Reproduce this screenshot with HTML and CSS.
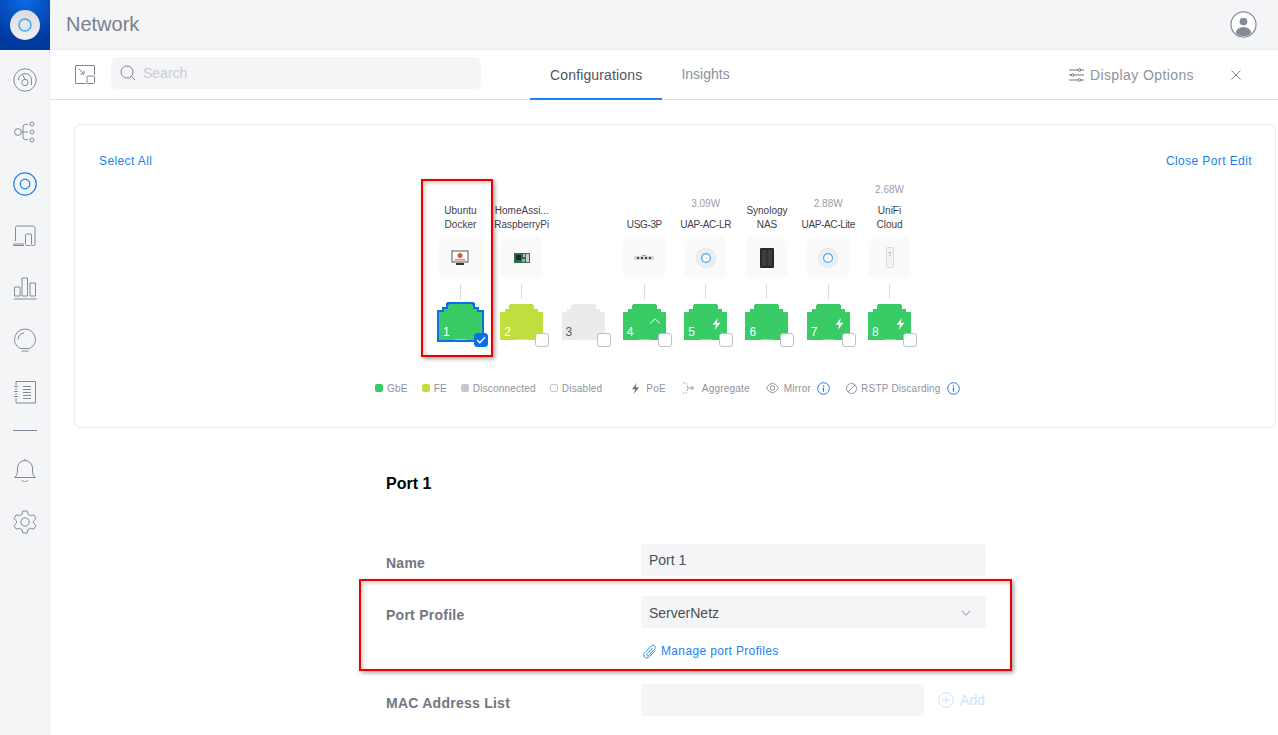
FILE: index.html
```html
<!DOCTYPE html>
<html lang="en">
<head>
  <meta charset="UTF-8">
  <title>Network</title>
  <link rel="stylesheet" href="styles.css">
</head>
<body>

<svg class="defs" width="0" height="0">
  <symbol id="rj45" viewBox="0 0 43 36" overflow="visible">
    <path d="M0 8H5V5H9V1H10V0H33V1H34V5H38V8H43V36H0Z"/>
  </symbol>
  <symbol id="bolt" viewBox="1 0 10 14">
    <path d="M7.500 0 1.500 8H5.500L4 14 10.500 5.500H6.500Z"/>
  </symbol>
  <symbol id="info" viewBox="0 0 13 13">
    <circle cx="6.500" cy="6.500" r="5.800" fill="none" stroke="currentColor"/>
    <path d="M6.500 5.600V9.800M6.500 3.200V4.400" fill="none" stroke="currentColor" stroke-width="1.200"/>
  </symbol>
  <symbol id="uap" viewBox="0 0 22 22">
    <circle cx="11" cy="11" r="10" fill="#eceef1" stroke="#e0e2e6" stroke-width=".6"/>
    <circle cx="11" cy="11" r="4.400" fill="#fff" stroke="#43a7ee" stroke-width="1.200"/>
    <circle cx="11" cy="11" r="1" fill="#bfe0f7"/>
  </symbol>
</svg>

<div class="sidebar">
  <div class="logo">
    <svg width="30" height="30" viewBox="0 0 30 30">
      <defs>
        <linearGradient id="logoFace" x1="0" y1="0" x2="0" y2="1">
          <stop offset="0" stop-color="#d8dade"/>
          <stop offset="1" stop-color="#f1f2f3"/>
        </linearGradient>
      </defs>
      <circle cx="15" cy="15" r="15" fill="url(#logoFace)"/>
      <circle cx="15" cy="15" r="6" fill="#dfe7ee" stroke="#3ea6f3" stroke-width="1.400"/>
    </svg>
  </div>
  <nav class="nav">
    <svg class="nav-icon" viewBox="0 0 24 24">
      <circle cx="12" cy="12" r="11.200"/>
      <path d="M5.500 12a6.500 6.500 0 0 1 13 0v5"/>
      <circle cx="12" cy="14.500" r="3.200"/>
      <path d="M9.500 6.500 12 11.300"/>
    </svg>
    <svg class="nav-icon" viewBox="0 0 24 24">
      <circle cx="5" cy="12" r="3.400"/>
      <path d="M8.400 12H15M15 4.500h-2.500a2.500 2.500 0 0 0-2.500 2.500v10a2.500 2.500 0 0 0 2.500 2.500H15"/>
      <circle cx="19" cy="4" r="2"/>
      <circle cx="19" cy="12" r="2"/>
      <circle cx="19" cy="20" r="2"/>
    </svg>
    <svg class="nav-icon nav-active" viewBox="0 0 24 24">
      <circle cx="12" cy="12" r="11.200"/>
      <circle cx="12" cy="12" r="4.800"/>
    </svg>
    <svg class="nav-icon" viewBox="0 0 24 24">
      <path d="M2.500 17V3.500a1.500 1.500 0 0 1 1.500-1.500h16.500a1.500 1.500 0 0 1 1.500 1.500V20a1.500 1.500 0 0 1-1.500 1.500H19"/>
      <path d="M.8 21.500H11M.8 21.500V20H11"/>
      <rect x="12.500" y="10" width="6" height="11.500" rx="1"/>
    </svg>
    <svg class="nav-icon" viewBox="0 0 24 24">
      <rect x="1.500" y="11" width="5.500" height="9"/>
      <rect x="9" y="2" width="5.500" height="18"/>
      <rect x="17" y="7" width="5.500" height="13"/>
      <path d="M.5 23H23.500"/>
    </svg>
    <svg class="nav-icon" viewBox="0 0 24 24">
      <path d="M8 20.500C4 19 1.500 15.500 1.500 11.500a10.500 10.500 0 0 1 21 0c0 4-2.500 7.500-6.500 9Z"/>
      <path d="M5 11.500A7 7 0 0 1 11 5M8.500 23H15.500"/>
    </svg>
    <svg class="nav-icon" viewBox="0 0 24 24">
      <path d="M3 1.500H22.500V23H3V18M3 15V13M3 10V8M3 5V1.500"/>
      <path d="M1 6.500H5M1 11.500H5M1 16.500H5M10 6.500H18M10 9.500H18M10 12.500H18M10 15.500H18M10 18.500H18"/>
    </svg>
    <div class="nav-divider"></div>
    <svg class="nav-icon" viewBox="0 0 24 24">
      <path d="M1.500 19.500C3.500 18 4.500 16 4.500 13V10a7.500 7.500 0 0 1 15 0v3c0 3 1 5 3 6.500Z"/>
      <path d="M12 .8V2.500M9 22a3.200 3.200 0 0 0 6 0"/>
    </svg>
    <svg class="nav-icon" viewBox="0 0 24 24">
      <circle cx="12" cy="12" r="4.200"/>
      <path d="M9.800 1H14.200L15 4.300 17.500 5.700 20.800 4.800 23 8.600 20.500 11V13L23 15.400 20.800 19.200 17.500 18.300 15 19.700 14.200 23H9.800L9 19.700 6.500 18.300 3.200 19.200 1 15.400 3.500 13V11L1 8.600 3.200 4.800 6.500 5.700 9 4.300Z"/>
    </svg>
  </nav>
</div>

<div class="main">
  <header class="topbar">
    <span class="topbar-title">Network</span>
    <svg class="avatar" width="27" height="27" viewBox="0 0 28 28">
      <defs><clipPath id="avatarClip"><circle cx="14" cy="14" r="12"/></clipPath></defs>
      <circle cx="14" cy="14" r="13" fill="#fff" stroke="#868a98" stroke-width="1.300"/>
      <circle cx="14" cy="11" r="4" fill="#868a98"/>
      <ellipse cx="14" cy="23" rx="8" ry="6.500" fill="#868a98" clip-path="url(#avatarClip)"/>
    </svg>
  </header>

  <div class="toolbar">
    <svg class="collapse-icon" width="20" height="20" viewBox="0 0 20 20">
      <path d="M12 .5H1A.5.5 0 0 0 .500 1V18a.5.5 0 0 0 .5.500H11M19.500 10V1a.5.5 0 0 0-.5-.5H12"/>
      <rect x="12" y="11" width="7.500" height="7.500" rx="1"/>
      <path d="M3.500 3.500 9 9M9 5.500V9H5.500"/>
    </svg>
    <div class="search">
      <svg width="16" height="16" viewBox="0 0 16 16">
        <circle cx="7" cy="7" r="6"/>
        <path d="M11.500 11.500 15 15"/>
      </svg>
      <span>Search</span>
    </div>
    <div class="tabs">
      <a class="tab tab-active">Configurations</a>
      <a class="tab">Insights</a>
    </div>
    <div class="display-options">
      <svg width="15" height="14" viewBox="0 0 15 14">
        <path d="M0 2H15M0 7H15M0 12H15"/>
        <circle cx="10.500" cy="2" r="1.300" fill="#fff"/>
        <circle cx="3.500" cy="7" r="1.300" fill="#fff"/>
        <circle cx="10.500" cy="12" r="1.300" fill="#fff"/>
      </svg>
      <span>Display Options</span>
    </div>
    <svg class="close-icon" width="10" height="10" viewBox="0 0 10 10">
      <path d="M.5.500 9.500 9.500M9.500.500 .5 9.500"/>
    </svg>
  </div>

  <section class="panel">
    <div class="panel-head">
      <a class="link">Select All</a>
      <a class="link">Close Port Edit</a>
    </div>

    <div class="ports">
      <div class="port-col">
        <div class="labels"><span>Ubuntu</span><span>Docker</span></div>
        <div class="tile">
          <svg width="18" height="16" viewBox="0 0 18 16">
            <rect x="1" y="1" width="16" height="11" fill="#fff" stroke="#555"/>
            <circle cx="9" cy="5.500" r="2.500" fill="#d9553a"/>
            <rect x="3.500" y="9" width="11" height="1.500" fill="#e08a75"/>
            <rect x="5" y="13" width="8" height="2" fill="#333"/>
          </svg>
        </div>
        <div class="wire"></div>
        <div class="port port-selected">
          <svg class="port-shape" viewBox="0 0 43 36"><use href="#rj45"/></svg>
          <span class="port-num">1</span>
          <span class="port-foot"></span>
          <span class="check check-on">
            <svg width="10" height="8" viewBox="0 0 10 8"><path d="M1 4 3.800 6.800 9 1.200"/></svg>
          </span>
        </div>
      </div>

      <div class="port-col">
        <div class="labels"><span>HomeAssi...</span><span>RaspberryPi</span></div>
        <div class="tile">
          <svg width="16" height="12" viewBox="0 0 16 12">
            <rect x="0" y="1" width="16" height="10" fill="#2f6d50"/>
            <rect x="2" y="3" width="5" height="5" fill="#1d2c26"/>
            <rect x="9" y="2" width="2" height="3" fill="#b8c4bd"/>
            <rect x="12" y="2" width="3" height="8" fill="#c8d0cb"/>
            <rect x="8" y="7" width="3" height="3" fill="#8fb3a0"/>
          </svg>
        </div>
        <div class="wire"></div>
        <div class="port port-fe">
          <svg class="port-shape" viewBox="0 0 43 36"><use href="#rj45"/></svg>
          <span class="port-num">2</span>
          <span class="port-foot"></span>
          <span class="check"></span>
        </div>
      </div>

      <div class="port-col">
        <div class="labels"></div>
        <div class="tile tile-empty"></div>
        <div class="wire wire-empty"></div>
        <div class="port port-off">
          <svg class="port-shape" viewBox="0 0 43 36"><use href="#rj45"/></svg>
          <span class="port-num">3</span>
          <span class="port-foot"></span>
          <span class="check"></span>
        </div>
      </div>

      <div class="port-col">
        <div class="labels"><span class="label-caps">USG-3P</span></div>
        <div class="tile">
          <svg width="20" height="6" viewBox="0 0 20 6">
            <rect x="0" y="1" width="20" height="4" rx="1" fill="#d4d6da"/>
            <rect x="3" y="2" width="2" height="2" fill="#444"/>
            <rect x="7" y="2" width="2" height="2" fill="#444"/>
            <rect x="11" y="2" width="2" height="2" fill="#444"/>
            <rect x="15" y="2" width="2" height="2" fill="#444"/>
            <rect x="8" y="0" width="4" height="1" fill="#6bb5e8"/>
          </svg>
        </div>
        <div class="wire"></div>
        <div class="port">
          <svg class="port-shape" viewBox="0 0 43 36"><use href="#rj45"/></svg>
          <span class="port-num">4</span>
          <svg class="port-up" width="12" height="6" viewBox="0 0 12 6"><path d="M1 5.500 6 .8 11 5.500"/></svg>
          <span class="port-foot"></span>
          <span class="check"></span>
        </div>
      </div>

      <div class="port-col">
        <div class="labels"><span class="watt">3.09W</span><span class="label-caps">UAP-AC-LR</span></div>
        <div class="tile"><svg width="22" height="22"><use href="#uap"/></svg></div>
        <div class="wire"></div>
        <div class="port">
          <svg class="port-shape" viewBox="0 0 43 36"><use href="#rj45"/></svg>
          <span class="port-num">5</span>
          <svg class="port-bolt" width="9" height="12"><use href="#bolt"/></svg>
          <span class="port-foot"></span>
          <span class="check"></span>
        </div>
      </div>

      <div class="port-col">
        <div class="labels"><span>Synology</span><span>NAS</span></div>
        <div class="tile">
          <svg width="14" height="20" viewBox="0 0 14 20">
            <rect x="0" y="0" width="14" height="20" rx="1" fill="#26282b"/>
            <rect x="2" y="2" width="4.500" height="16" fill="#3b3e42"/>
            <rect x="7.500" y="2" width="4.500" height="16" fill="#3b3e42"/>
          </svg>
        </div>
        <div class="wire"></div>
        <div class="port">
          <svg class="port-shape" viewBox="0 0 43 36"><use href="#rj45"/></svg>
          <span class="port-num">6</span>
          <span class="port-foot"></span>
          <span class="check"></span>
        </div>
      </div>

      <div class="port-col">
        <div class="labels"><span class="watt">2.88W</span><span class="label-caps">UAP-AC-Lite</span></div>
        <div class="tile"><svg width="22" height="22"><use href="#uap"/></svg></div>
        <div class="wire"></div>
        <div class="port">
          <svg class="port-shape" viewBox="0 0 43 36"><use href="#rj45"/></svg>
          <span class="port-num">7</span>
          <svg class="port-bolt" width="9" height="12"><use href="#bolt"/></svg>
          <span class="port-foot"></span>
          <span class="check"></span>
        </div>
      </div>

      <div class="port-col">
        <div class="labels"><span class="watt">2.68W</span><span>UniFi</span><span>Cloud</span></div>
        <div class="tile">
          <svg width="8" height="21" viewBox="0 0 8 21">
            <rect x=".5" y=".5" width="7" height="20" rx="1" fill="#f3f3f4" stroke="#d8d9dc"/>
            <rect x="3.300" y="5" width="1.400" height="1.400" fill="#8a8d92"/>
            <rect x="3.300" y="8" width="1.400" height="1.400" fill="#b5b7bb"/>
          </svg>
        </div>
        <div class="wire"></div>
        <div class="port">
          <svg class="port-shape" viewBox="0 0 43 36"><use href="#rj45"/></svg>
          <span class="port-num">8</span>
          <svg class="port-bolt" width="9" height="12"><use href="#bolt"/></svg>
          <span class="port-foot"></span>
          <span class="check"></span>
        </div>
      </div>
    </div>

    <div class="legend">
      <span class="legend-item"><i class="dot dot-gbe"></i>GbE</span>
      <span class="legend-item"><i class="dot dot-fe"></i>FE</span>
      <span class="legend-item"><i class="dot dot-off"></i>Disconnected</span>
      <span class="legend-item"><i class="dot dot-disabled"></i>Disabled</span>
      <span class="legend-item legend-poe">
        <svg class="legend-bolt" width="9" height="11"><use href="#bolt"/></svg>PoE
      </span>
      <span class="legend-item legend-wide">
        <svg class="legend-line legend-aggregate" width="13" height="12" viewBox="0 0 13 12">
          <path class="dashed" d="M1 1H2.500C5 1 5.500 3 5.500 6S5 11 2.500 11H1"/>
          <path d="M5.500 6H11.500M9.500 4 11.500 6 9.500 8"/>
        </svg>Aggregate
      </span>
      <span class="legend-item legend-wide">
        <svg class="legend-line" width="13" height="10" viewBox="0 0 13 10">
          <path d="M.5 5C2.500 1.800 4.500.5 6.500.5S10.500 1.800 12.500 5C10.500 8.200 8.500 9.500 6.500 9.500S2.500 8.200.5 5Z"/>
          <circle cx="6.500" cy="5" r="2.200"/>
        </svg>Mirror
        <svg class="legend-info" width="13" height="13"><use href="#info"/></svg>
      </span>
      <span class="legend-item legend-wide">
        <svg class="legend-line legend-rstp" width="11" height="11" viewBox="0 0 11 11">
          <circle cx="5.500" cy="5.500" r="5"/>
          <path d="M2 9 9 2"/>
        </svg>RSTP Discarding
        <svg class="legend-info" width="13" height="13"><use href="#info"/></svg>
      </span>
    </div>
  </section>

  <form class="port-form">
    <h2 class="form-title">Port 1</h2>

    <div class="form-row">
      <label class="form-label">Name</label>
      <div class="form-field">
        <div class="input">Port 1</div>
      </div>
    </div>

    <div class="form-row">
      <label class="form-label">Port Profile</label>
      <div class="form-field">
        <div class="input input-select">
          ServerNetz
          <svg width="10" height="6" viewBox="0 0 10 6"><path d="M.8.8 5 5 9.200.8"/></svg>
        </div>
        <a class="manage-link">
          <svg width="14" height="15" viewBox="0 0 14 15">
            <path d="M12.300 6.500 6.500 12.600C5 14.200 2.800 14.400 1.600 13.200S.6 10 2 8.500L8 2.200C9 1.100 10.600.9 11.600 1.800S12.500 4.200 11.500 5.300L5.800 11.300C5.200 11.900 4.400 12 3.900 11.500S3.500 10.300 4.100 9.700L9.500 4"/>
          </svg>
          Manage port Profiles
        </a>
      </div>
    </div>

    <div class="form-row form-row-last">
      <label class="form-label">MAC Address List</label>
      <div class="form-field form-field-add">
        <div class="input input-mac"></div>
        <span class="add-btn">
          <svg width="16" height="16" viewBox="0 0 16 16">
            <circle cx="8" cy="8" r="7.400"/>
            <path d="M8 4V12M4 8H12"/>
          </svg>
          Add
        </span>
      </div>
    </div>
  </form>
</div>

<!-- annotations drawn on top of the screenshot -->
<div class="callout callout-port"></div>
<div class="callout callout-profile"></div>

</body>
</html>
```

FILE: styles.css
```css
* {
  box-sizing: border-box;
}

html, body {
  height: 735px;
  overflow: hidden;
}

body {
  margin: 0;
  display: flex;
  position: relative;
  background-color: #fff;
  font-family: "Liberation Sans", Arial, sans-serif;
  color: #80848f;
}

.defs {
  position: absolute;
}

/* sidebar */
.sidebar {
  width: 50px;
  flex-shrink: 0;
  background-color: #f4f5f7;
  border-right: 1px solid #e9eaee;
}

.logo {
  width: 50px;
  height: 50px;
  display: flex;
  align-items: center;
  justify-content: center;
  background: radial-gradient(circle at 50% 0, #0a6be6, #003a9e 75%);
}

.nav {
  display: flex;
  flex-direction: column;
  align-items: center;
  gap: 28px;
  padding-top: 18px;
}

.nav-icon {
  width: 24px;
  height: 24px;
  fill: none;
  stroke: #868a98;
  stroke-width: 1;
  stroke-linejoin: round;
}

.nav-active {
  stroke: #1b7fee;
  stroke-width: 1.200;
}

.nav-divider {
  width: 24px;
  height: 1px;
  margin: -2px 0 -1px;
  background-color: #868a98;
}

/* top */
.main {
  flex: 1;
  min-width: 0;
}

.topbar {
  height: 50px;
  display: flex;
  align-items: center;
  justify-content: space-between;
  padding: 0 21px 0 16px;
  background-color: #f4f5f7;
  border-bottom: 1px solid #ececf0;
}

.topbar-title {
  font-size: 20px;
  color: #7c808d;
}

.toolbar {
  height: 50px;
  display: flex;
  align-items: center;
  padding-left: 25px;
  border-bottom: 1px solid #dfe0e4;
}

.collapse-icon {
  fill: none;
  stroke: #80848f;
}

.search {
  width: 370px;
  height: 32px;
  margin: -3px 0 0 16px;
  padding-left: 9px;
  display: flex;
  align-items: center;
  gap: 7px;
  background-color: #f4f5f7;
  border-radius: 6px;
  font-size: 14px;
  color: #c9ccd6;
}

.search svg {
  fill: none;
  stroke: #80848f;
}

.tabs {
  display: flex;
  align-self: stretch;
  margin-left: 49px;
  margin-bottom: -1px;
}

.tab {
  display: flex;
  align-items: center;
  padding: 0 19px 2px;
  font-size: 14px;
  color: #8e929e;
}

.tab-active {
  padding: 1px 20px 0;
  letter-spacing: 0.15px;
  color: #50545f;
  border-bottom: 2px solid #1b7fee;
}

.display-options {
  display: flex;
  align-items: center;
  gap: 6px;
  margin-left: auto;
  font-size: 14px;
  letter-spacing: 0.4px;
  color: #8e929e;
}

.display-options svg {
  fill: none;
  stroke: #70747f;
}

.close-icon {
  margin: 0 37px 0 37px;
  fill: none;
  stroke: #868a98;
}

/* port panel */
.panel {
  margin: 24px 2px 0 24px;
  height: 304px;
  padding: 29px 23px 0 24px;
  border: 1px solid #ececf0;
  border-radius: 6px;
}

.panel-head {
  display: flex;
  justify-content: space-between;
}

.link {
  font-size: 12px;
  line-height: 14px;
  letter-spacing: 0.4px;
  color: #1b7fee;
}

.ports {
  display: flex;
  justify-content: center;
  margin-top: 15px;
  margin-left: -1px;
}

.port-col {
  width: 61.3px;
  display: flex;
  flex-direction: column;
  align-items: center;
}

.labels {
  height: 49px;
  display: flex;
  flex-direction: column;
  justify-content: flex-end;
  align-items: center;
  font-size: 10px;
  line-height: 14px;
  color: #3f4149;
  white-space: nowrap;
}

.label-caps {
  letter-spacing: -0.35px;
}

.watt {
  margin-bottom: 7px;
  color: #9a9da6;
}

.tile {
  width: 43px;
  height: 43px;
  margin-top: 4px;
  display: flex;
  align-items: center;
  justify-content: center;
  background-color: #fafafb;
  border-radius: 7px;
}

.tile-empty {
  background: none;
}

.wire {
  width: 1px;
  height: 15px;
  margin-top: 5px;
  background-color: #d9d9dd;
}

.wire-empty {
  background: none;
}

.port {
  position: relative;
  width: 43px;
  height: 36px;
  margin-top: 5px;
  fill: #39cb66;
}

.port-shape {
  display: block;
  width: 43px;
  height: 36px;
  overflow: visible;
}

.port-fe {
  fill: #bfdf3f;
}

.port-off {
  fill: #ebebed;
}

.port-selected .port-shape {
  stroke: #0a6fe8;
  stroke-width: 4;
  paint-order: stroke;
}

.port-num {
  position: absolute;
  left: 4px;
  bottom: 1px;
  font-size: 12px;
  line-height: 14px;
  color: #fff;
}

.port-off .port-num {
  color: #555862;
}

.port-foot {
  position: absolute;
  left: 16px;
  bottom: 0;
  width: 12px;
  height: 1px;
  background-color: rgba(255, 255, 255, 0.35);
}

.port-bolt {
  position: absolute;
  top: 14px;
  right: 6px;
  fill: #fff;
}

.port-up {
  position: absolute;
  top: 14px;
  right: 5px;
  fill: none;
  stroke: #fff;
}

.check {
  position: absolute;
  right: -6px;
  bottom: -7px;
  width: 14px;
  height: 14px;
  display: flex;
  align-items: center;
  justify-content: center;
  background-color: #fff;
  border: 1px solid #bcbec8;
  border-radius: 3px;
}

.check-on {
  background-color: #0a6fe8;
  border-color: #0a6fe8;
}

.check-on svg {
  fill: none;
  stroke: #fff;
  stroke-width: 1.300;
}

/* legend */
.legend {
  display: flex;
  align-items: center;
  gap: 14px;
  height: 14px;
  margin: 41px 0 0 276px;
  font-size: 10px;
  letter-spacing: 0.2px;
  white-space: nowrap;
  color: #8e929e;
}

.legend-item {
  display: flex;
  align-items: center;
}

.dot {
  width: 8px;
  height: 8px;
  margin-right: 4px;
  border-radius: 2px;
}

.dot-gbe {
  background-color: #39cb66;
}

.dot-fe {
  background-color: #bfdf3f;
}

.dot-off {
  background-color: #c6c8d0;
}

.dot-disabled {
  background-color: #fff;
  border: 1px solid #c6c8d0;
}

.legend-poe {
  margin-left: 15px;
}

.legend-wide {
  margin-left: 2px;
}

.legend-bolt {
  margin-right: 6px;
  fill: #70747f;
}

.legend-line {
  margin-right: 5px;
  fill: none;
  stroke: #8e929e;
}

.legend-aggregate {
  margin-right: 7px;
}

.legend-aggregate .dashed {
  stroke-dasharray: 1.500 1.500;
}

.legend-rstp {
  margin-right: 4px;
}

.legend-info {
  margin-left: 6px;
  color: #1b7fee;
}

/* form below the panel */
.port-form {
  margin: 46px 0 0 336px;
}

.form-title {
  margin: 0 0 50px;
  font-size: 16px;
  line-height: 20px;
  color: #000;
}

.form-row {
  display: grid;
  grid-template-columns: 255px 345px;
  margin-bottom: 20px;
}

.form-label {
  padding-top: 11px;
  font-size: 14px;
  line-height: 16px;
  font-weight: bold;
  letter-spacing: 0.25px;
  color: #737680;
}

.input {
  height: 32px;
  padding: 0 8px;
  display: flex;
  align-items: center;
  justify-content: space-between;
  background-color: #f4f5f7;
  border-radius: 4px;
  font-size: 14px;
  color: #4c4f58;
}

.input-select {
  padding-top: 1px;
}

.input-select svg {
  margin-right: 7px;
  fill: none;
  stroke: #b4b6be;
  stroke-width: 1.300;
}

.manage-link {
  display: flex;
  align-items: center;
  gap: 4px;
  height: 16px;
  margin: 15px 0 5px 2px;
  font-size: 12px;
  letter-spacing: 0.35px;
  color: #1b7fee;
}

.manage-link svg {
  fill: none;
  stroke: #1b7fee;
  stroke-width: 0.9;
}

.form-field-add {
  display: flex;
  align-items: center;
  gap: 14px;
}

.input-mac {
  width: 283px;
}

.add-btn {
  display: flex;
  align-items: center;
  gap: 6px;
  font-size: 14px;
  letter-spacing: 0.1px;
  color: #cfe3fb;
}

.add-btn svg {
  fill: none;
  stroke: #cfe3fb;
}

/* red annotation boxes */
.callout {
  position: absolute;
  border: 2px solid #ee0000;
  box-shadow: 2px 2px 4px rgba(0, 0, 0, 0.35), inset 2px 2px 4px rgba(0, 0, 0, 0.2);
  pointer-events: none;
}

.callout-port {
  left: 421px;
  top: 179px;
  width: 72px;
  height: 178px;
}

.callout-profile {
  left: 359px;
  top: 579px;
  width: 653px;
  height: 92px;
}
```
